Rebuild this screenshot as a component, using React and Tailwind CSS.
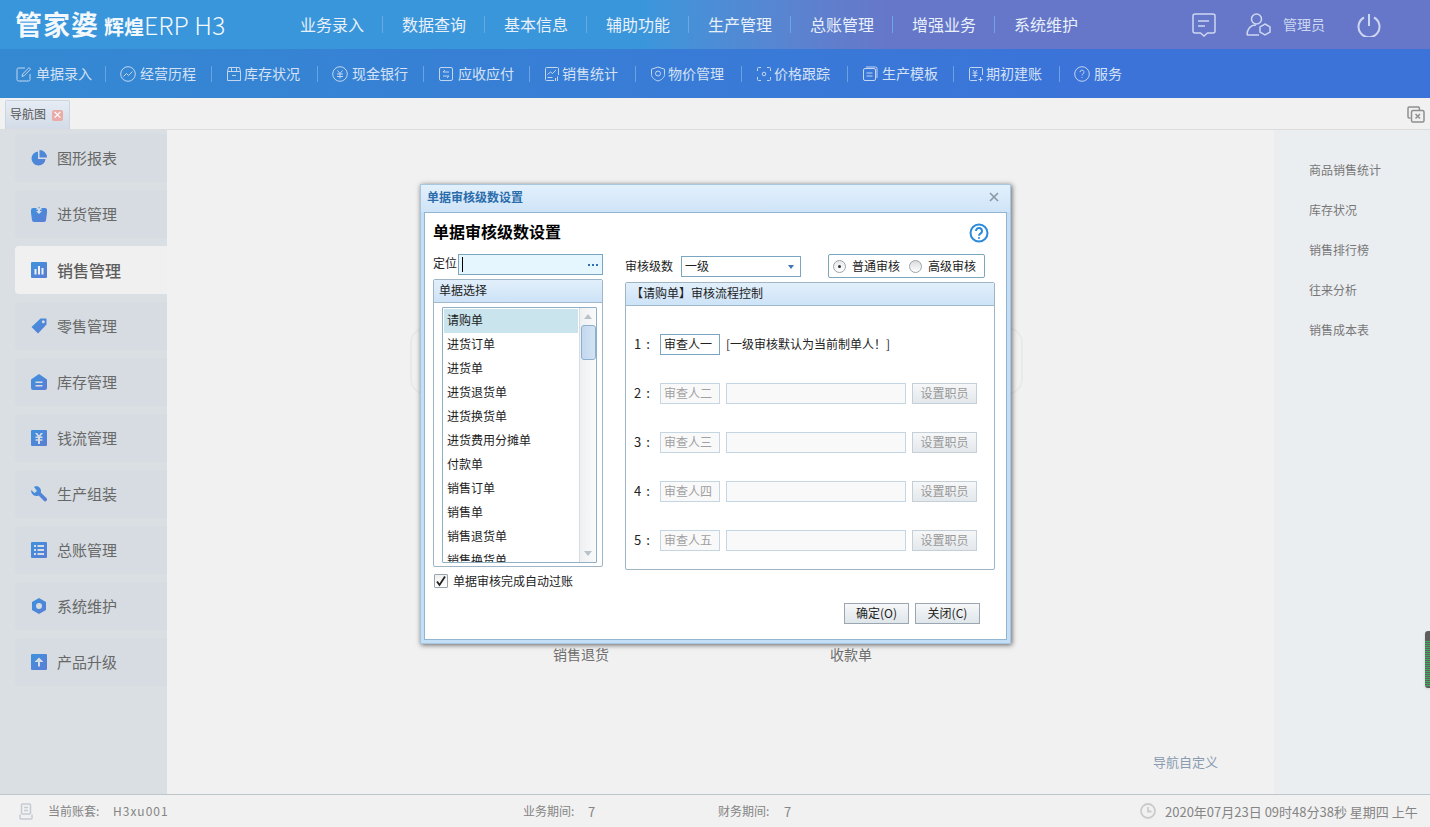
import React, { useId } from 'react';

const topMenu = ['业务录入', '数据查询', '基本信息', '辅助功能', '生产管理', '总账管理', '增强业务', '系统维护'];

// toolbar icons, thin outline drawings
const ToolIcon = ({ children }) => (
  <svg width="16" height="16" viewBox="0 0 16 16" fill="none" stroke="#c3d6f1" strokeWidth="1" className="shrink-0">
    {children}
  </svg>
);

const tools = [
  { label: '单据录入', gap: 'gap-[4px]', icon: <><path d="M9 2H2.500A1.500 1.500 0 0 0 1 3.500v10A1.500 1.500 0 0 0 2.500 15h10a1.500 1.500 0 0 0 1.500-1.500V8" /><path d="M6 10.500l.6-2.400L13 1.600l1.600 1.600-6.400 6.500z" /></> },
  { label: '经营历程', gap: 'gap-[4px]', icon: <><circle cx="8" cy="8" r="7.300" /><path d="M3.500 10.500l3-3 2 2 4-4" /></> },
  { label: '库存状况', gap: 'gap-[2px]', icon: <><path d="M2.500 1.500h11l1 4v9h-13v-9z" /><path d="M1.500 5.500h13M5.500 1.500v4M10.500 1.500v4M6 9.500h4" /></> },
  { label: '现金银行', gap: 'gap-[4px]', icon: <><circle cx="8" cy="8" r="7.300" /><path d="M5.500 4.500L8 7.500l2.500-3M5 8h6M5 10.500h6M8 7.500v5" /></> },
  { label: '应收应付', gap: 'gap-[4px]', icon: <><rect x="1.500" y="1.500" width="13" height="13" rx="1.500" /><path d="M11 6H5l2-2M5 10h6l-2 2" /></> },
  { label: '销售统计', gap: 'gap-[2px]', icon: <><path d="M10 14.500H2.500a1 1 0 0 1-1-1v-11a1 1 0 0 1 1-1h11a1 1 0 0 1 1 1V9" /><path d="M3.500 8.500l3-2.500 2 1.500 3.500-3.500M3.500 11.500h5M11.500 15v-3M13.500 15v-4.500" /></> },
  { label: '物价管理', gap: 'gap-[2px]', icon: <><path d="M8 1l6.500 2.200v5.300c0 3-3 5.500-6.500 6.500-3.500-1-6.500-3.500-6.500-6.500V3.200z" /><circle cx="8" cy="7.500" r="2.500" /></> },
  { label: '价格跟踪', gap: 'gap-[2px]', icon: <><path d="M5 1.500H2.500a1 1 0 0 0-1 1V5M11 1.500h2.500a1 1 0 0 1 1 1V5M5 14.500H2.500a1 1 0 0 1-1-1V11M11 14.500h2.500a1 1 0 0 0 1-1V11" /><circle cx="8" cy="8" r="1.800" /></> },
  { label: '生产模板', gap: 'gap-[4px]', icon: <><rect x="1.500" y="2.500" width="12" height="12" rx="1.500" /><path d="M4 1h9.500A1.500 1.500 0 0 1 15 2.500V12M4.500 7h6M4.500 10h6" /></> },
  { label: '期初建账', gap: 'gap-[2px]', icon: <><path d="M9 14.500H2.500a1 1 0 0 1-1-1v-11a1 1 0 0 1 1-1h11a1 1 0 0 1 1 1V9" /><path d="M5 4l2 2.500L9 4M4.500 7h5M4.500 9.500h5M7 6.500V12M12.500 11v4.500M10.500 13.500h4" /></> },
  { label: '服务', gap: 'gap-[4px]', icon: <><circle cx="8" cy="8" r="7.300" /><path d="M6 6.200a2 2 0 1 1 3 1.700c-.7.400-1 .8-1 1.600M8 11.200v.8" /></> },
];

// sidebar icons have a small blue gradient
function Filled({ children }) {
  const id = useId();
  return (
    <svg width="16" height="16" viewBox="0 0 16 16" fill={`url(#${id})`} className="shrink-0">
      <defs>
        <linearGradient id={id} x1="0" y1="0" x2="1" y2="1">
          <stop offset="0" stopColor="#3d92dd" />
          <stop offset="1" stopColor="#5c7dd5" />
        </linearGradient>
      </defs>
      {children}
    </svg>
  );
}

const sideItems = [
  { label: '图形报表', icon: <path d="M7 1.500a7 7 0 1 0 7.500 7.500H7zM8.500 0v7.500H16A7.500 7.500 0 0 0 8.500 0z" /> },
  { label: '进货管理', icon: <path fillRule="evenodd" d="M2 2h3.500v2H6.500L8 .5 9.500 4h1V2H14a2 2 0 0 1 2 2v3l-1 7a2 2 0 0 1-2 2H3a2 2 0 0 1-2-2L0 7V4a2 2 0 0 1 2-2zM7 1h2v4h2L8 8 5 5h2z" /> },
  { label: '销售管理', active: true, icon: <path fillRule="evenodd" d="M1 0h14a1 1 0 0 1 1 1v14a1 1 0 0 1-1 1H1a1 1 0 0 1-1-1V1a1 1 0 0 1 1-1zm2.500 7v5.500h2V7zm3.500-3v8.500h2V4zm3.500 2v6.500h2V6z" /> },
  { label: '零售管理', icon: <path fillRule="evenodd" d="M9.500.5H15a.5.500 0 0 1 .5.500v5.500L7 15.500.5 9zM12.300 2.200a1.500 1.500 0 1 0 0 3 1.500 1.500 0 0 0 0-3z" /> },
  { label: '库存管理', icon: <path fillRule="evenodd" d="M8 0l8 5.500V14a2 2 0 0 1-2 2H2a2 2 0 0 1-2-2V5.500zM4.500 7.500v1.500h7V7.500zm0 3.500v1.500h7V11z" /> },
  { label: '钱流管理', icon: <path fillRule="evenodd" d="M1 0h14a1 1 0 0 1 1 1v14a1 1 0 0 1-1 1H1a1 1 0 0 1-1-1V1a1 1 0 0 1 1-1zm3 3l2.800 3.500H4.500V8H7v1.200H4.500v1.500H7V14h2v-3.300h2.500V9.200H9V8h2.500V6.500H9.200L12 3H9.800L8 5.500 6.200 3z" /> },
  { label: '生产组装', icon: <path d="M5 0a5 5 0 0 1 4.800 6.400l5.600 5.600a1.800 1.800 0 0 1-2.600 2.800L7.600 9.400A5 5 0 0 1 .3 4L3.500 7 6 5 3 1z" /> },
  { label: '总账管理', icon: <path fillRule="evenodd" d="M1 0h14a1 1 0 0 1 1 1v14a1 1 0 0 1-1 1H1a1 1 0 0 1-1-1V1a1 1 0 0 1 1-1zm2 3v2h2V3zm3.500 0v2H13V3zM3 7v2h2V7zm3.500 0v2H13V7zM3 11v2h2v-2zm3.500 0v2H13v-2z" /> },
  { label: '系统维护', icon: <path fillRule="evenodd" d="M8 0l7 4v8l-7 4-7-4V4zm0 5a3 3 0 1 0 0 6 3 3 0 0 0 0-6z" /> },
  { label: '产品升级', icon: <path fillRule="evenodd" d="M1 0h14a1 1 0 0 1 1 1v14a1 1 0 0 1-1 1H1a1 1 0 0 1-1-1V1a1 1 0 0 1 1-1zm7 3.500L3.500 8H7v4.500h2V8h3.500z" /> },
];

const docList = ['请购单', '进货订单', '进货单', '进货退货单', '进货换货单', '进货费用分摊单', '付款单', '销售订单', '销售单', '销售退货单', '销售换货单'];
const auditors = ['审查人二', '审查人三', '审查人四', '审查人五'];
const rightLinks = ['商品销售统计', '库存状况', '销售排行榜', '往来分析', '销售成本表'];

function TopBar() {
  return (
    <div className="h-[49px] flex items-center bg-gradient-to-r from-[#3a96db] from-[45%] to-[#6677c9] to-[62%]">
      <div className="w-[281px] pl-[15px] flex items-baseline text-white/95 whitespace-nowrap">
        <span className="text-[27px] leading-[34px] font-bold tracking-[1px]">管家婆</span>
        <span className="text-[20px] font-bold ml-[5px]">辉煌</span>
        <span className="text-[25px] leading-[34px] font-light">ERP H3</span>
      </div>
      {topMenu.map((m, i) => (
        <div key={m} className={`pl-[19px] pr-[18px] h-[17px] flex items-center text-[16px] leading-none text-[#e8f0fa] ${i < 7 ? 'border-r border-[#6aa8e4]' : ''}`}>
          <span className="pb-[2px]">{m}</span>
        </div>
      ))}
      <div className="ml-auto flex items-center pr-[49px]">
        <svg width="24" height="24" viewBox="0 0 24 24" fill="none" stroke="#cdd7f0" strokeWidth="1.500">
          <path d="M3 1h18a2 2 0 0 1 2 2v15a2 2 0 0 1-2 2h-5.500L12 23l-3.500-3H3a2 2 0 0 1-2-2V3a2 2 0 0 1 2-2z" />
          <path d="M6 8h11M6 13h7" />
        </svg>
        <svg width="25" height="23" viewBox="0 0 25 23" fill="none" stroke="#cdd7f0" strokeWidth="1.500" className="ml-[30px]">
          <circle cx="10.500" cy="6" r="5" />
          <path d="M1 22c0-6 3.500-10 9-10M1 22h12" />
          <path d="M19 11l5 2.900v5.200L19 22l-5-2.900v-5.200z" />
        </svg>
        <span className="ml-[12px] w-[42px] pb-[2px] text-[14px] leading-none text-[#cdd7f0]">管理员</span>
        <svg width="24" height="24" viewBox="0 0 24 24" fill="none" stroke="#cdd7f0" strokeWidth="2" className="ml-[32px]">
          <path d="M12 1v12" />
          <path d="M7 4.500a10.500 10.500 0 1 0 10 0" />
        </svg>
      </div>
    </div>
  );
}

function ToolBar() {
  return (
    <div className="h-[49px] flex items-center bg-gradient-to-r from-[#3489d2] to-[#3b73d9] to-[75%]">
      {tools.map((t, i) => (
        <div
          key={t.label}
          className={`w-[106px] h-[16px] flex items-center text-[14px] leading-none text-[#d5e2f5] ${t.gap} ${i === 0 ? 'pl-[16px]' : 'pl-[14px]'} ${i < 10 ? 'border-r border-[#6ba3e2]' : ''}`}
        >
          <ToolIcon>{t.icon}</ToolIcon>
          <span className="pb-[2px]">{t.label}</span>
        </div>
      ))}
    </div>
  );
}

function TabBar() {
  return (
    <div className="h-[32px] flex items-end justify-between pl-[5px] pr-[5px] bg-[#f1f1f1] border-b border-[#dcdcdc]">
      <div className="w-[65px] h-[29px] flex items-center pl-[4px] gap-[6px] rounded-t-[2px] border border-b-0 border-[#ccd5e0] bg-gradient-to-b from-[#e6ecf4] to-[#d2dbe7] text-[12px] leading-none text-[#555]">
        <span className="pb-[2px]">导航图</span>
        <span className="w-[11px] h-[11px] flex items-center justify-center rounded-[2px] bg-[#e9aaa8] text-[10px] font-bold leading-none text-white">×</span>
      </div>
      <svg width="18" height="17" viewBox="0 0 18 17" fill="none" stroke="#8f8f8f" strokeWidth="1.500" className="mb-[6px]">
        <path d="M3.500 12H2.200A1.200 1.200 0 0 1 1 10.800V2.200A1.200 1.200 0 0 1 2.200 1h9A1.200 1.200 0 0 1 12.400 2.200V4" />
        <rect x="4.500" y="4.500" width="12.500" height="11.500" rx="1.500" />
        <path d="M8.500 8l4.500 4.500M13 8l-4.500 4.500" />
      </svg>
    </div>
  );
}

function SideBar() {
  return (
    <div className="w-[167px] shrink-0 bg-[#d9dfe3] pt-[4px] pl-[15px] flex flex-col gap-[8px]">
      {sideItems.map((s) => (
        <div
          key={s.label}
          className={`h-[48px] flex items-center pl-[16px] gap-[10px] rounded-l-[4px] ${
            s.active ? 'bg-[#f0f0f0] text-[16px] font-medium text-[#5e5e5e]' : 'bg-[#d6dce1] text-[15px] text-[#686868]'
          }`}
        >
          <Filled>{s.icon}</Filled>
          {s.label}
        </div>
      ))}
    </div>
  );
}

function Panel({ title, className, children }) {
  return (
    <div className={`border border-[#9fb4c4] rounded-[2px] bg-white flex flex-col ${className}`}>
      <div className="h-[23px] shrink-0 flex items-center px-[5px] pb-[2px] border-b border-[#9fb8cc] bg-gradient-to-b from-[#e2effb] to-[#cde3f7] text-[12px] leading-none text-[#222]">
        {title}
      </div>
      {children}
    </div>
  );
}

function AuditDialog() {
  return (
    <div className="absolute left-[420px] top-[184px] w-[591px] h-[460px] flex flex-col border border-[#a8c6de] bg-[#c3dff7] shadow-[1px_1px_5px_rgba(0,0,0,0.6)] px-[3px] pb-[3px]">
      <div className="h-[27px] shrink-0 flex items-center justify-between -mx-[3px] pl-[6px] pr-[11px] pb-[3px] bg-gradient-to-b from-[#e2f0fc] to-[#cfe4f8]">
        <span className="text-[12px] leading-none font-bold text-[#2b6cab]">单据审核级数设置</span>
        <svg width="10" height="10" viewBox="0 0 10 10" fill="none" stroke="#8a97a3" strokeWidth="1.600">
          <path d="M1 1l8 8M9 1l-8 8" />
        </svg>
      </div>
      <div className="flex-1 bg-white border border-[#93b4cf] px-[8px] flex flex-col">
        <div className="h-[41px] flex items-center justify-between pr-[9px]">
          <h2 className="mb-[6px] text-[16px] leading-none font-bold text-black">单据审核级数设置</h2>
          <svg width="20" height="20" viewBox="0 0 20 20" fill="none" stroke="#2b8adb" strokeWidth="2" className="mb-[1px]">
            <circle cx="10" cy="10" r="8.500" />
            <path d="M7 8a3 3 0 1 1 4.700 2.400c-1.200.8-1.700 1.300-1.700 2.300M10 14.200v1.600" />
          </svg>
        </div>
        <div className="flex gap-[22px]">
          {/* left column */}
          <div className="w-[170px] shrink-0">
            <div className="h-[25px] flex items-start">
              <span className="w-[25px] mt-[1px] text-[12px] leading-[16px] text-[#222]">定位</span>
              <div className="flex-1 h-[21px] border border-[#7ba6bf] bg-[#e5f6ff] flex items-center justify-between pl-[3px] pr-[3px]">
                <span className="w-[1px] h-[15px] bg-black" />
                <span className="flex gap-[2px] pr-[1px]">
                  <i className="w-[2px] h-[2px] bg-[#2f6fb5]" />
                  <i className="w-[2px] h-[2px] bg-[#2f6fb5]" />
                  <i className="w-[2px] h-[2px] bg-[#2f6fb5]" />
                </span>
              </div>
            </div>
            <Panel title="单据选择" className="h-[288px]">
              <div className="ml-[8px] mr-[5px] mt-[4px] h-[256px] border border-[#8fb0c4] rounded-[1px] flex overflow-hidden">
                <div className="flex-1 overflow-hidden pt-[1px] px-[1px]">
                  {docList.map((d, i) => (
                    <div key={d} className={`h-[24px] flex items-center pl-[3px] pb-[2px] text-[12px] leading-none text-[#1c1c1c] ${i === 0 ? 'bg-[#c9e4ec]' : ''}`}>
                      {d}
                    </div>
                  ))}
                </div>
                <div className="w-[17px] shrink-0 flex flex-col items-center border-l border-[#d5dde3] bg-gradient-to-r from-[#eef0f2] to-[#fafafa]">
                  <div className="h-[17px] w-full flex items-center justify-center">
                    <span className="border-x-[4px] border-x-transparent border-b-[5px] border-b-[#b9c2c9]" />
                  </div>
                  <div className="w-[15px] h-[35px] rounded-[3px] border border-[#8fafcf] bg-gradient-to-r from-[#c3d8ef] to-[#d3e3f3]" />
                  <div className="mt-auto h-[17px] w-full flex items-center justify-center">
                    <span className="border-x-[4px] border-x-transparent border-t-[5px] border-t-[#b9c2c9]" />
                  </div>
                </div>
              </div>
            </Panel>
            <div className="mt-[7px] flex items-center gap-[5px] pl-[1px] text-[12px] leading-none text-[#222]">
              <span className="w-[14px] h-[14px] flex items-center justify-center border border-[#9aa4ad] rounded-[1px] bg-gradient-to-b from-[#f0f0f0] to-white">
                <svg width="12" height="12" viewBox="0 0 12 12" fill="none" stroke="#222" strokeWidth="1.800">
                  <path d="M2 6.500l2.500 3.500L10 1.500" />
                </svg>
              </span>
              单据审核完成自动过账
            </div>
          </div>
          {/* right column */}
          <div className="w-[370px] shrink-0">
            <div className="h-[28px] flex items-start">
              <span className="w-[56px] mt-[4px] text-[12px] leading-[16px] text-[#222]">审核级数</span>
              <div className="mt-[2px] w-[120px] h-[21px] border border-[#7ba6bf] flex items-center justify-between pl-[3px] pr-[6px] text-[12px] leading-none text-[#222]">
                <span className="pb-[1px]">一级</span>
                <span className="border-x-[3.500px] border-x-transparent border-t-[4px] border-t-[#3a78b8]" />
              </div>
              <div className="ml-[27px] w-[157px] h-[24px] border border-[#7ba6bf] rounded-[2px] flex items-center pl-[4px] text-[12px] leading-none text-[#222]">
                <span className="w-[13px] h-[13px] rounded-full border border-[#9aa4ad] bg-gradient-to-b from-[#e9e9e9] to-white flex items-center justify-center">
                  <i className="w-[3px] h-[3px] rounded-full bg-[#333]" />
                </span>
                <span className="ml-[6px]">普通审核</span>
                <span className="ml-[9px] w-[13px] h-[13px] rounded-full border border-[#9aa4ad] bg-gradient-to-b from-[#dcdcdc] to-white" />
                <span className="ml-[6px]">高级审核</span>
              </div>
            </div>
            <Panel title="【请购单】审核流程控制" className="h-[288px]">
              <div className="pl-[8px] pt-[28px]">
                <div className="h-[21px] flex items-center text-[12px] leading-none text-[#222]">
                  <span className="w-[26px] text-[13px] pb-[2px] tracking-[1px]">1 :</span>
                  <span className="w-[60px] h-[21px] flex items-center pl-[3px] pb-[1px] border border-[#7ba6bf]">审查人一</span>
                  <span className="ml-[6px] pb-[2px]">[一级审核默认为当前制单人！]</span>
                </div>
                {auditors.map((a, i) => (
                  <div key={a} className="mt-[28px] h-[21px] flex items-center text-[12px] leading-none">
                    <span className="w-[26px] text-[13px] pb-[2px] tracking-[1px] text-[#222]">{i + 2} :</span>
                    <span className="w-[60px] h-[21px] flex items-center pl-[3px] pb-[1px] border border-[#c5d6e2] bg-[#f9f9f9] text-[#a0a0a0]">{a}</span>
                    <span className="ml-[6px] w-[180px] h-[21px] border border-[#c5d6e2] bg-[#f9f9f9]" />
                    <span className="ml-[6px] w-[65px] h-[21px] flex items-center justify-center pb-[1px] border border-[#c5cfd8] bg-gradient-to-b from-[#f6f7f8] to-[#e3e8ec] text-[#999]">设置职员</span>
                  </div>
                ))}
              </div>
            </Panel>
          </div>
        </div>
        <div className="mt-[15px] flex justify-end gap-[6px] pr-[18px]">
          <button className="w-[65px] h-[21px] flex items-center justify-center pb-[1px] border border-[#9aa7b3] bg-gradient-to-b from-[#f6f7f8] to-[#dfe6ea] text-[12px] leading-none text-[#222]">确定(O)</button>
          <button className="w-[65px] h-[21px] flex items-center justify-center pb-[1px] border border-[#9aa7b3] bg-gradient-to-b from-[#f6f7f8] to-[#dfe6ea] text-[12px] leading-none text-[#222]">关闭(C)</button>
        </div>
      </div>
    </div>
  );
}

function StatusBar() {
  return (
    <div className="h-[33px] flex items-center bg-[#f1f1f1] border-t border-[#bcc6cb] text-[12px] leading-none text-[#858585] pl-[18px]">
      <svg width="16" height="17" viewBox="0 0 16 17" fill="none" stroke="#c5cad3" strokeWidth="1.500">
        <rect x="3.500" y="1" width="9" height="10" rx="1" />
        <path d="M6 4.500h4M6 7.500h4M2 11.500v3.500a1 1 0 0 0 1 1h10a1 1 0 0 0 1-1v-3.500" />
      </svg>
      <span className="ml-[14px] w-[475px] flex">
        <span className="w-[65px]">当前账套:</span>
        <span className="tracking-[1px]">H3xu001</span>
      </span>
      <span className="w-[195px] flex">
        <span className="w-[65px]">业务期间:</span>
        <span className="text-[13px]">7</span>
      </span>
      <span className="w-[422px] flex">
        <span className="w-[66px]">财务期间:</span>
        <span className="text-[13px]">7</span>
      </span>
      <svg width="16" height="16" viewBox="0 0 16 16" fill="none" stroke="#cbcbcb" strokeWidth="1.800">
        <circle cx="8" cy="8" r="7" />
        <path d="M8 4v4.500h3.500" />
      </svg>
      <span className="ml-[9px] text-[13px] whitespace-nowrap">2020年07月23日 09时48分38秒 星期四 上午</span>
    </div>
  );
}

export default function App() {
  return (
    <div className="relative w-[1430px] h-[827px] overflow-hidden flex flex-col bg-[#f1f1f1] font-['Noto_Sans_CJK_SC','Noto_Sans',sans-serif]">
      <TopBar />
      <ToolBar />
      <TabBar />
      <div className="flex-1 flex min-h-0">
        <SideBar />
        <div className="relative flex-1">
          {/* navigation diagram behind the dialog */}
          <div className="absolute left-[243px] top-[197px] w-[613px] h-[68px] rounded-[16px] border-2 border-[#e9e9e9]" />
          <span className="absolute left-[386px] top-[515px] text-[14px] leading-[18px] text-[#6e6e6e]">销售退货</span>
          <span className="absolute left-[663px] top-[515px] text-[14px] leading-[18px] text-[#6e6e6e]">收款单</span>
          <span className="absolute left-[986px] top-[624px] text-[13px] leading-[16px] text-[#8a9bb0]">导航自定义</span>
        </div>
        <div className="w-[156px] shrink-0 bg-[#ebeef1] pt-[32px] pl-[35px] flex flex-col gap-[24px]">
          {rightLinks.map((r) => (
            <div key={r} className="h-[16px] text-[12px] leading-[16px] text-[#777]">{r}</div>
          ))}
        </div>
      </div>
      <StatusBar />
      <AuditDialog />
      {/* floating grip at the right edge */}
      <div className="absolute left-[1425px] top-[631px] w-[5px] h-[57px] rounded-l-[3px] bg-[#5d5d5d] shadow-sm flex flex-col justify-center gap-[1px] pt-[8px] overflow-hidden">
        {Array.from({ length: 23 }).map((_, i) => (
          <i key={i} className="h-[1px] bg-[#3fae5e]" />
        ))}
      </div>
    </div>
  );
}
